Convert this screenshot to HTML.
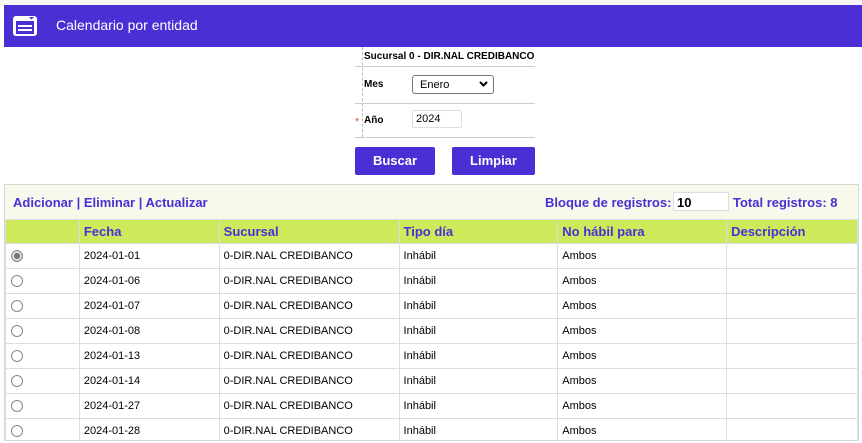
<!DOCTYPE html>
<html><head><meta charset="utf-8"><style>
*{box-sizing:border-box;margin:0;padding:0}
body{width:862px;height:443px;background:#fff;font-family:"Liberation Sans",sans-serif;position:relative;overflow:hidden}
.top{position:absolute;left:0;top:0;width:862px;height:5px;background:#f7f7f7}
.hdr{position:absolute;left:4px;top:5px;width:858px;height:42px;background:#4b2fd4;color:#fff;font-size:14px}
.hdr span{position:absolute;left:52px;top:12px}
.form{position:absolute;left:355px;top:47px;width:180px;font-size:10px;color:#000}
.line{position:absolute;left:0;width:180px;height:1px;background:#ccc}
.b{font-weight:bold;white-space:nowrap}
.btn{position:absolute;top:147px;height:28px;background:#4b2fd4;color:#fff;font-weight:bold;font-size:13px;text-align:center;line-height:28px;border-radius:2px}
.panel{position:absolute;left:4px;top:184px;width:855px;height:257px;border:1px solid #d8d8d8;background:#fff;overflow:hidden}
.tb{position:absolute;left:0;top:0;width:853px;height:34px;background:#f7f9ec;color:#4b2fd4;font-weight:bold;font-size:13px;white-space:nowrap}
table{position:absolute;left:0;top:34px;border-collapse:collapse;font-size:11px;table-layout:fixed}
td,th{border:1px solid #dcdce8;height:25px;padding:0 0 0 4px;text-align:left;white-space:nowrap}
th{background:#ccea5a;color:#4b2fd4;font-size:13px;height:24px;font-weight:bold}
.r{width:12px;height:12px;border:1px solid #888;border-radius:50%;display:inline-block;margin-left:1px;margin-top:3px}
</style></head><body>
<div class="top"></div>
<div class="hdr">
<svg style="position:absolute;left:8px;top:10px" width="26" height="22" viewBox="0 0 26 22"><rect x="1" y="1" width="24" height="20" rx="3" fill="#fff"/><rect x="4" y="6" width="18" height="13" fill="#4b2fd4"/><rect x="6" y="10" width="14" height="2" fill="#fff"/><rect x="6" y="14" width="14" height="2" fill="#fff"/><path d="M17 2h5l-2.5 2.5z" fill="#4b2fd4"/></svg>
<span>Calendario por entidad</span></div>
<div class="form" style="height:100px">
<div style="position:absolute;left:7px;top:0;width:0;height:90px;border-left:1px dashed #bbb"></div>
<div class="b" style="position:absolute;left:9px;top:4px;font-size:10px">Sucursal 0 - DIR.NAL CREDIBANCO</div>
<div class="line" style="top:19px"></div>
<div class="b" style="position:absolute;left:9px;top:32px">Mes</div>
<div style="position:absolute;left:57px;top:28px;width:82px;height:19px;border:1px solid #777;border-radius:3px;font-size:11px;padding:3px 0 0 7px">Enero<svg style="position:absolute;right:5px;top:5px" width="9" height="6" viewBox="0 0 9 6"><path d="M1 1l3.5 3.5L8 1" stroke="#000" stroke-width="2" fill="none"/></svg></div>
<div class="line" style="top:56px"></div>
<div style="position:absolute;left:0;top:69px;color:#e0602a;font-size:11px">*</div>
<div class="b" style="position:absolute;left:9px;top:68px">Año</div>
<div style="position:absolute;left:57px;top:63px;width:50px;height:18px;border:1px solid #ddd;border-radius:2px;padding:2px 0 0 3px;font-size:11px">2024</div>
<div class="line" style="top:90px"></div>
</div>
<div class="btn" style="left:355px;width:80px">Buscar</div>
<div class="btn" style="left:452px;width:83px">Limpiar</div>
<div class="panel">
<div class="tb"><span style="position:absolute;left:8px;top:10px">Adicionar | Eliminar | Actualizar</span>
<span style="position:absolute;left:540px;top:10px">Bloque de registros:</span>
<span style="position:absolute;left:668px;top:7px;width:56px;height:19px;border:1px solid #ddd;background:#fff;color:#000;padding:2px 0 0 3px">10</span>
<span style="position:absolute;left:728px;top:10px">Total registros: 8</span></div>
<table>
<colgroup><col style="width:74px"><col style="width:140px"><col style="width:180px"><col style="width:159px"><col style="width:169px"><col style="width:131px"></colgroup>
<tr><th></th><th>Fecha</th><th>Sucursal</th><th>Tipo día</th><th>No hábil para</th><th>Descripción</th></tr>
<tr><td><span class="r" style="background:radial-gradient(#777 40%,#ddd 45%)"></span></td><td>2024-01-01</td><td>0-DIR.NAL CREDIBANCO</td><td>Inhábil</td><td>Ambos</td><td></td></tr>
<tr><td><span class="r"></span></td><td>2024-01-06</td><td>0-DIR.NAL CREDIBANCO</td><td>Inhábil</td><td>Ambos</td><td></td></tr>
<tr><td><span class="r"></span></td><td>2024-01-07</td><td>0-DIR.NAL CREDIBANCO</td><td>Inhábil</td><td>Ambos</td><td></td></tr>
<tr><td><span class="r"></span></td><td>2024-01-08</td><td>0-DIR.NAL CREDIBANCO</td><td>Inhábil</td><td>Ambos</td><td></td></tr>
<tr><td><span class="r"></span></td><td>2024-01-13</td><td>0-DIR.NAL CREDIBANCO</td><td>Inhábil</td><td>Ambos</td><td></td></tr>
<tr><td><span class="r"></span></td><td>2024-01-14</td><td>0-DIR.NAL CREDIBANCO</td><td>Inhábil</td><td>Ambos</td><td></td></tr>
<tr><td><span class="r"></span></td><td>2024-01-27</td><td>0-DIR.NAL CREDIBANCO</td><td>Inhábil</td><td>Ambos</td><td></td></tr>
<tr><td><span class="r"></span></td><td>2024-01-28</td><td>0-DIR.NAL CREDIBANCO</td><td>Inhábil</td><td>Ambos</td><td></td></tr>
</table>
</div>
</body></html>
